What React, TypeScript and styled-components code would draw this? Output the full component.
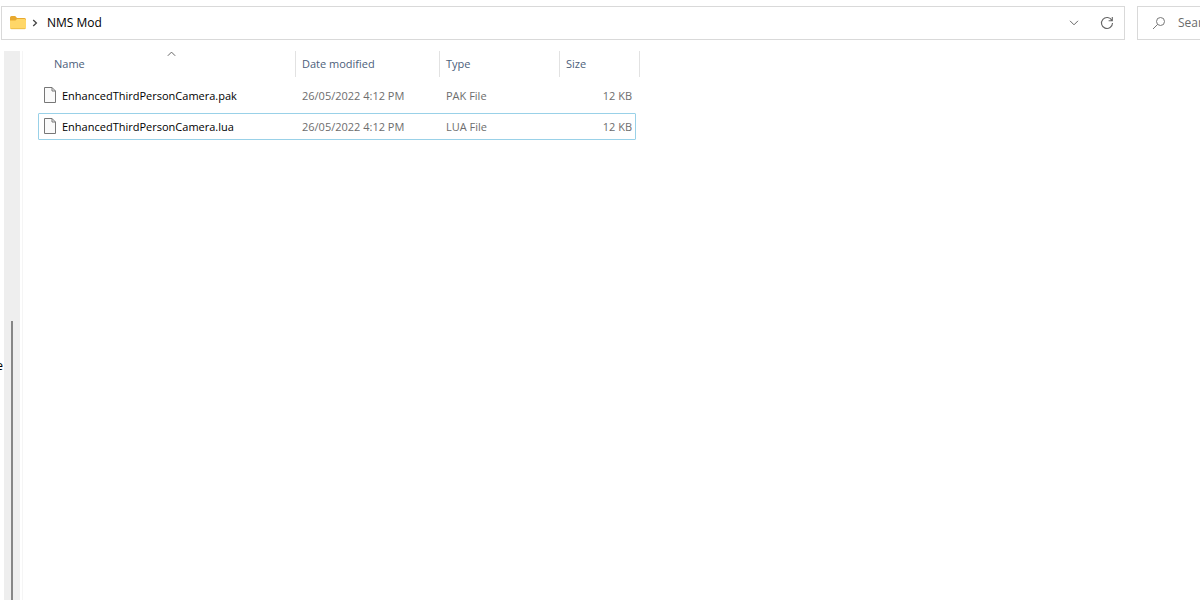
import React from "react";
import styled, { createGlobalStyle } from "styled-components";

const GlobalStyle = createGlobalStyle`
  * { box-sizing: border-box; }
  body {
    margin: 0;
    background: #fff;
    color: #000;
    font: 12px/16px "Segoe UI", "Open Sans", "Noto Sans", sans-serif;
    overflow: hidden;
  }
  button, input { font: inherit; }
`;

const Window = styled.div`
  display: flex;
  flex-direction: column;
  height: 100vh;
`;

const Toolbar = styled.header`
  display: flex;
  gap: 12px;
  padding: 6px 0 0 1px;
`;

const AddressBar = styled.nav`
  display: flex;
  flex: 1;
  align-items: center;
  height: 34px;
  padding: 0 0 0 7px;
  border: 1px solid #d9d9d9;
`;

const IconButton = styled.button<{ $width: number }>`
  display: flex;
  align-items: center;
  justify-content: center;
  width: ${(p) => p.$width}px;
  height: 32px;
  padding: 0;
  border: 0;
  background: none;
  color: #666;
`;

const Crumb = styled.a`
  margin-left: 4px;
  color: #000;
  text-decoration: none;
`;

const Spacer = styled.div`
  flex: 1;
`;

const SearchBox = styled.label`
  display: flex;
  align-items: center;
  gap: 12px;
  width: 63px;
  height: 34px;
  padding-left: 14px;
  border: 1px solid #d9d9d9;
  border-right: 0;
  overflow: hidden;
  color: #777;

  svg { flex: none; }
`;

const SearchInput = styled.input`
  flex: none;
  width: 160px;
  padding: 0;
  border: 0;
  outline: 0;
  background: none;

  &::placeholder { color: #6b6b6b; opacity: 1; }
`;

const Body = styled.div`
  display: flex;
  flex: 1;
  min-height: 0;
  padding-top: 11px;
`;

const NavPane = styled.aside`
  display: flex;
  width: 23px;
  padding-right: 2px;
  border-right: 1px solid #f5f5f5;
`;

const NavLabels = styled.div`
  display: flex;
  justify-content: flex-end;
  width: 4px;
  padding-top: 307px;
  padding-right: 1px;
  overflow: hidden;
`;

const ScrollTrack = styled.div`
  display: flex;
  justify-content: center;
  width: 16px;
  padding-top: 270px;
  background: #eee;
`;

const ScrollThumb = styled.div`
  width: 2px;
  background: #868686;
`;

const FileTable = styled.table`
  display: block;
  margin-left: 15px;
  font-size: 11px;
  thead, tbody { display: block; }
  tbody { padding: 5px 4px 0 0; }
`;

const HeaderRow = styled.tr`
  display: grid;
  grid-template-columns: 258px 144px 120px 80px;
`;

const HeaderCell = styled.th<{ $inset?: number }>`
  position: relative;
  height: 26px;
  padding: 5px 0 0 ${(p) => p.$inset ?? 6}px;
  border-right: 1px solid #e2e2e2;
  color: #4c607a;
  font-weight: 400;
  text-align: left;
`;

const SortMark = styled.svg`
  position: absolute;
  top: 0;
  left: 50%;
`;

const FileRow = styled.tr<{ $focused?: boolean }>`
  display: grid;
  grid-template-columns: 258px 144px 120px 76px;
  align-items: center;
  height: 27px;
  margin-bottom: 4px;
  border-radius: 1px;
  outline: ${(p) => (p.$focused ? "1px solid #99d1e8" : "none")};
  outline-offset: -1px;
`;

const Cell = styled.td<{ $align?: string }>`
  padding: 0 4px 0 6px;
  color: #6d6d6d;
  text-align: ${(p) => p.$align ?? "left"};
`;

const NameCell = styled(Cell)`
  display: flex;
  align-items: center;
  gap: 6px;
  color: #000;
`;

const FolderIcon = () => (
  <svg width="18" height="16" viewBox="0 0 18 16" aria-hidden="true">
    <path d="M1 2.500Q1 1 2.500 1h3.700l1.800 2h7.500Q17 3 17 4.500V11H1z" fill="#e8a92e" />
    <path d="M1 5.500h5.500L8 4h7.500Q17 4 17 5.500v7q0 1.500-1.500 1.500h-13Q1 14 1 12.500z" fill="#ffd768" />
    <path d="M1.500 13q.3.700 1 .700h13q.7 0 1-.7" fill="none" stroke="#e9b63c" strokeWidth=".8" />
  </svg>
);

const FileIcon = () => (
  <svg width="12" height="18" viewBox="0 0 12 18" fill="none" stroke="#777" aria-hidden="true">
    <path d="M.5.5H8L11.500 4v11.500H.5z" fill="#fafafa" />
    <path d="M8 .5V4h3.500" />
  </svg>
);

const files = [
  { name: "EnhancedThirdPersonCamera.pak", date: "26/05/2022 4:12 PM", type: "PAK File", size: "12 KB" },
  { name: "EnhancedThirdPersonCamera.lua", date: "26/05/2022 4:12 PM", type: "LUA File", size: "12 KB", focused: true },
];

export default function App() {
  return (
    <>
      <GlobalStyle />
      <Window>
        <Toolbar>
          <AddressBar aria-label="Address">
            <FolderIcon />
            <IconButton $width={16} aria-label="Show folders">
              <svg width="6" height="8" viewBox="0 0 6 8" fill="none" stroke="#444" strokeWidth="1.300">
                <path d="M1.200 1L4.400 4 1.200 7" />
              </svg>
            </IconButton>
            <Crumb href="#">NMS Mod</Crumb>
            <Spacer />
            <IconButton $width={32} aria-label="Previous locations">
              <svg width="10" height="6" viewBox="0 0 10 6" fill="none" stroke="currentColor">
                <path d="M1 .8L5 4.800 9 .8" />
              </svg>
            </IconButton>
            <IconButton $width={34} aria-label="Refresh">
              <svg width="14" height="14" viewBox="0 0 14 14" fill="none" stroke="currentColor" strokeWidth="1.100">
                <path d="M11.900 4.500A5.500 5.500 0 1 0 12.500 7M12.300 1v3.700H8.600" />
              </svg>
            </IconButton>
          </AddressBar>
          <SearchBox>
            <svg width="14" height="14" viewBox="0 0 14 14" fill="none" stroke="currentColor">
              <circle cx="8.500" cy="5.500" r="4" />
              <path d="M5.600 8.400L1 13" />
            </svg>
            <SearchInput type="search" placeholder="Search NMS Mod" aria-label="Search NMS Mod" />
          </SearchBox>
        </Toolbar>
        <Body>
          <NavPane>
            <NavLabels>e</NavLabels>
            <ScrollTrack>
              <ScrollThumb />
            </ScrollTrack>
          </NavPane>
          <FileTable>
            <thead>
              <HeaderRow>
                <HeaderCell $inset={16}>
                  Name
                  <SortMark width="9" height="6" viewBox="0 0 9 6" fill="none" stroke="#666">
                    <path d="M.8 4.800L4.500 1.100 8.200 4.800" />
                  </SortMark>
                </HeaderCell>
                <HeaderCell>Date modified</HeaderCell>
                <HeaderCell>Type</HeaderCell>
                <HeaderCell>Size</HeaderCell>
              </HeaderRow>
            </thead>
            <tbody>
              {files.map((f) => (
                <FileRow key={f.name} $focused={f.focused}>
                  <NameCell>
                    <FileIcon />
                    {f.name}
                  </NameCell>
                  <Cell>{f.date}</Cell>
                  <Cell>{f.type}</Cell>
                  <Cell $align="right">{f.size}</Cell>
                </FileRow>
              ))}
            </tbody>
          </FileTable>
        </Body>
      </Window>
    </>
  );
}
